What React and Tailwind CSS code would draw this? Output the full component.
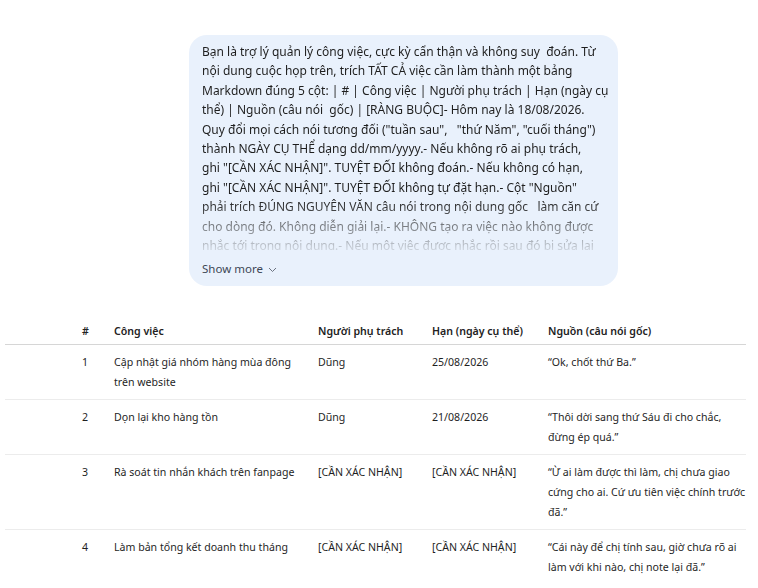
import React from "react";

const lines = [
  "Bạn là trợ lý quản lý công việc, cực kỳ cẩn thận và không suy  đoán. Từ",
  "nội dung cuộc họp trên, trích TẤT CẢ việc cần làm thành một bảng",
  "Markdown đúng 5 cột: | # | Công việc | Người phụ trách | Hạn (ngày cụ",
  "thể) | Nguồn (câu nói  gốc) | [RÀNG BUỘC]- Hôm nay là 18/08/2026.",
  "Quy đổi mọi cách nói tương đối (\"tuần sau\",   \"thứ Năm\", \"cuối tháng\")",
  "thành NGÀY CỤ THỂ dạng dd/mm/yyyy.- Nếu không rõ ai phụ trách,",
  "ghi \"[CẦN XÁC NHẬN]\". TUYỆT ĐỐI không đoán.- Nếu không có hạn,",
  "ghi \"[CẦN XÁC NHẬN]\". TUYỆT ĐỐI không tự đặt hạn.- Cột \"Nguồn\"",
  "phải trích ĐÚNG NGUYÊN VĂN câu nói trong nội dung gốc   làm căn cứ",
  "cho dòng đó. Không diễn giải lại.- KHÔNG tạo ra việc nào không được",
  "nhắc tới trong nội dung.- Nếu một việc được nhắc rồi sau đó bị sửa lại",
  "thì chỉ lấy phiên bản cuối cùng.",
];

const rows = [
  {
    n: "1",
    task: ["Cập nhật giá nhóm hàng mùa đông", "trên website"],
    who: "Dũng",
    due: "25/08/2026",
    src: ["“Ok, chốt thứ Ba.”"],
  },
  {
    n: "2",
    task: ["Dọn lại kho hàng tồn"],
    who: "Dũng",
    due: "21/08/2026",
    src: ["“Thôi dời sang thứ Sáu đi cho chắc,", "đừng ép quá.”"],
  },
  {
    n: "3",
    task: ["Rà soát tin nhắn khách trên fanpage"],
    who: "[CẦN XÁC NHẬN]",
    due: "[CẦN XÁC NHẬN]",
    src: [
      "“Ừ ai làm được thì làm, chị chưa giao",
      "cứng cho ai. Cứ ưu tiên việc chính trước",
      "đã.”",
    ],
  },
  {
    n: "4",
    task: ["Làm bản tổng kết doanh thu tháng"],
    who: "[CẦN XÁC NHẬN]",
    due: "[CẦN XÁC NHẬN]",
    src: ["“Cái này để chị tính sau, giờ chưa rõ ai", "làm với khi nào, chị note lại đã.”"],
  },
];

const grid = "grid grid-cols-[77px_32px_204px_114px_116px_1fr]";

export default function App() {
  return (
    <div
      className="min-h-[588px] w-[758px] overflow-hidden bg-white text-[#1f1f1f]"
      style={{ fontFamily: '"Noto Sans", "Open Sans", sans-serif' }}
    >
      <div className="flex justify-end pt-[35px] pr-[140px]">
        <div className="w-[429px] rounded-[18px] bg-[#e9f1fc] pl-[13px] pr-[8px] pt-[7px] pb-[8px]">
          <div className="h-[208px] overflow-hidden text-[12px] leading-[19.4px] [mask-image:linear-gradient(to_bottom,black_76%,transparent_104%)]">
            {lines.map((l, i) => (
              <div key={i} className="whitespace-pre">
                {l}
              </div>
            ))}
          </div>
          <div className="mt-[10px] flex items-center gap-[5px] text-[11.5px] leading-[18px] text-[#3d4756]">
            <span>Show more</span>
            <svg width="9" height="6" viewBox="0 0 9 6" fill="none" className="mt-[1px]">
              <path d="M1 1l3.5 3.5L8 1" stroke="#6b7280" strokeWidth="1" />
            </svg>
          </div>
        </div>
      </div>

      <div className="mt-[30px] ml-[5px] w-[741px] text-[10.6px] leading-[20px]">
        <div className={`${grid} border-b border-[#d6d6d6] pt-[5px] pb-[3px] font-semibold text-[#222]`}>
          <div />
          <div>#</div>
          <div>Công việc</div>
          <div>Người phụ trách</div>
          <div>Hạn (ngày cụ thể)</div>
          <div>Nguồn (câu nói gốc)</div>
        </div>
        {rows.map((r, i) => (
          <div
            key={r.n}
            className={`${grid} py-[7px] ${i < rows.length - 1 ? "border-b border-[#ececec]" : ""}`}
          >
            <div />
            <div>{r.n}</div>
            <div>
              {r.task.map((t, j) => (
                <div key={j} className="whitespace-nowrap">{t}</div>
              ))}
            </div>
            <div className="whitespace-nowrap">{r.who}</div>
            <div className="whitespace-nowrap">{r.due}</div>
            <div>
              {r.src.map((t, j) => (
                <div key={j} className="whitespace-nowrap">{t}</div>
              ))}
            </div>
          </div>
        ))}
      </div>
    </div>
  );
}
